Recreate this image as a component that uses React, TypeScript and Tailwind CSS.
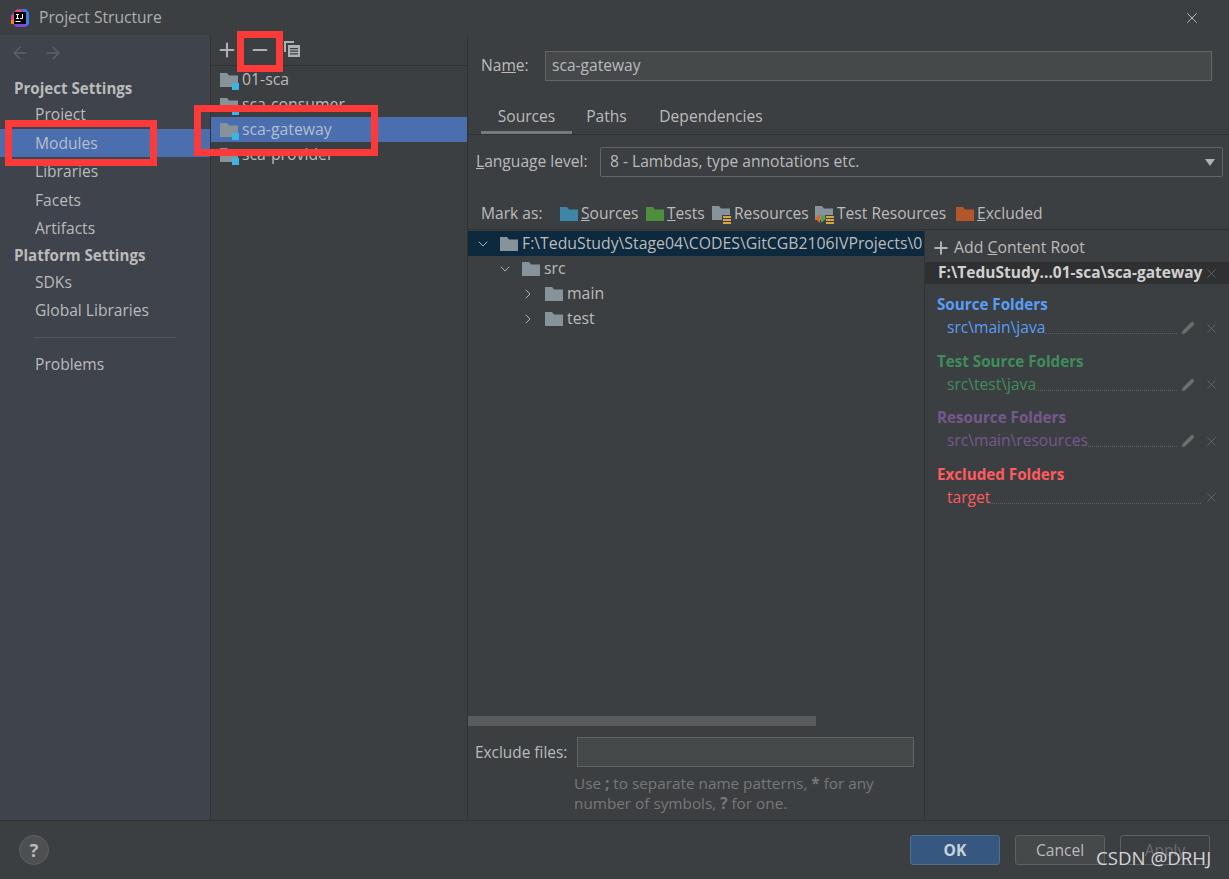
import React from "react";
import { Plus, Minus, X, ArrowLeft, ArrowRight, ChevronDown, ChevronRight, Pencil } from "lucide-react";

function Folder({ c = "#87939a", className = "" }: { c?: string; className?: string }) {
  return (
    <svg width="18" height="14" viewBox="0 0 18 14" className={className}>
      <path d="M0 0h7l2 2.5h9V14H0z" fill={c} />
    </svg>
  );
}

function ModuleFolder() {
  return (
    <span className="relative block w-[18px] h-[14px] shrink-0">
      <Folder />
      <span className="absolute left-[12px] top-[10px] w-[7px] h-[7px] bg-[#3cb4e6]" />
    </span>
  );
}

function ResourceIcon({ test = false }: { test?: boolean }) {
  return (
    <svg width="20" height="18" viewBox="0 0 20 18" className="shrink-0 mt-[2px]">
      <path d="M0 0h7l2 2.5h9V14H0z" fill="#87939a" />
      <path d="M10 9h10v9H10z" fill="#3c3f41" />
      <path d="M11 10h8v2h-8zM11 13h8v2h-8zM11 16h8v2h-8z" fill="#d9a343" />
      {test && <path d="M5 8v9L0 12.5z" fill="#e8622c" />}
      {test && <path d="M6 8v9l5-4.5z" fill="#4ca64c" />}
    </svg>
  );
}

function NavItem({ label, active = false }: { label: string; active?: boolean }) {
  return (
    <div className={"h-[28.5px] flex items-center pl-[35px] pt-[1px] text-[15.6px] " + (active ? "bg-[#4b6eaf] text-[#b4bfcc]" : "text-[#bbbbbb]")}>{label}</div>
  );
}

function ModuleRow({ label, active = false }: { label: string; active?: boolean }) {
  return (
    <div className={"h-[25px] flex items-center pl-[9px] gap-[4px] text-[15.8px] " + (active ? "bg-[#4b6eaf] text-[#b4bfcc]" : "text-[#bbbbbb]")}>
      <ModuleFolder />
      <span>{label}</span>
    </div>
  );
}

function Tree({ pad, label, open, sel }: { pad: number; label: string; open: boolean; sel?: boolean }) {
  return (
    <div className={"h-[25px] flex items-center text-[15.8px] text-[#bbbbbb] whitespace-nowrap overflow-hidden " + (sel ? "bg-[#0d293e]" : "")} style={{ paddingLeft: pad }}>
      {open ? <ChevronDown size={16} strokeWidth={1.5} className="shrink-0 text-[#afb1b3]" /> : <ChevronRight size={16} strokeWidth={1.5} className="shrink-0 text-[#afb1b3]" />}
      <Folder className="shrink-0 ml-[9px] mr-[4px]" />
      <span>{label}</span>
    </div>
  );
}

function FolderGroup({ title, path, color, edit = true }: { title: string; path: string; color: string; edit?: boolean }) {
  return (
    <div className="h-[56.5px] pl-[12px] pr-[10px]">
      <div className="h-[25px] flex items-center text-[15.2px] font-bold" style={{ color }}>{title}</div>
      <div className="h-[22px] flex items-center pl-[10px] text-[15.6px]" style={{ color }}>
        <span>{path}</span>
        <span className="flex-1 self-end mb-[5px] border-b border-dotted border-[#5f6163] mr-[3px]" />
        {edit && <Pencil size={14} fill="#6e6e6e" strokeWidth={1} className="text-[#6e6e6e] mr-[9px] ml-[1px]" />}
        <X size={15} strokeWidth={1.3} className="text-[#6a6d6f]" />
      </div>
    </div>
  );
}

export default function App() {
  return (
    <div className="relative w-[1229px] h-[879px] overflow-hidden bg-[#3c3f41] flex flex-col text-[#bbbbbb] font-['Open_Sans','Noto_Sans',sans-serif]">
      {/* title bar */}
      <div className="h-[35px] shrink-0 flex items-center pl-[10px] pr-[28px] text-[15.6px] text-[#adafb0]">
        <svg width="20" height="20" viewBox="0 0 20 20" className="mr-[9px]">
          <path d="M1 7 7 1h8l4 4v10l-4 4H6L1 14z" fill="#7b4bd8" />
          <path d="M1 10 6 2h6L3 16z" fill="#f0495f" />
          <path d="M13 1h3l3 4v11l-3 3z" fill="#3a7bf0" />
          <path d="M1 12h3v4H1z" fill="#f58220" />
          <rect x="4" y="4" width="12" height="12" fill="#000" />
          <rect x="5.5" y="13" width="5" height="1" fill="#fff" />
          <path d="M6 6h3v1h-1v3h1v1H6v-1h1V7H6zM10 6h3v4c0 1-1 1-3 1v-1h2V6z" fill="#fff" />
        </svg>
        <span>Project Structure</span>
        <X size={18} strokeWidth={1.2} className="ml-auto text-[#c4c4c4]" />
      </div>

      <div className="flex-1 min-h-0 flex border-b border-[#2f3132]">
        {/* sidebar */}
        <div className="w-[211px] shrink-0 bg-[#3e434c] border-r border-[#323232] flex flex-col">
          <div className="h-[36px] shrink-0 flex items-center pl-[10px] gap-[13px] text-[#5f6264]">
            <ArrowLeft size={20} strokeWidth={1.6} />
            <ArrowRight size={20} strokeWidth={1.6} />
          </div>
          <div className="h-[29px] shrink-0 pt-[5px] pl-[14px] flex items-center text-[15.1px] font-bold">Project Settings</div>
          <NavItem label="Project" />
          <NavItem label="Modules" active />
          <NavItem label="Libraries" />
          <NavItem label="Facets" />
          <NavItem label="Artifacts" />
          <div className="h-[25px] shrink-0 pl-[14px] flex items-center text-[15.1px] font-bold">Platform Settings</div>
          <NavItem label="SDKs" />
          <NavItem label="Global Libraries" />
          <div className="mx-[34px] mt-[12px] mb-[12px] border-t border-[#51555c]" />
          <NavItem label="Problems" />
        </div>

        {/* middle */}
        <div className="w-[257px] shrink-0 border-r border-[#323232] flex flex-col">
          <div className="h-[31px] shrink-0 flex items-center pl-[5px] border-b border-[#323232] text-[#afb1b3]">
            <Plus size={22} strokeWidth={2.3} />
            <Minus size={22} strokeWidth={2.3} className="ml-[11px]" />
            <svg width="16" height="16" viewBox="0 0 16 16" className="ml-[13px] -mt-[2px]">
              <path d="M0 0h10v2H2v9H0z" fill="#afb1b3" />
              <path d="M4 4h12v12H4z" fill="#afb1b3" />
              <path d="M6 7h8v1.2H6zM6 9.6h8v1.2H6zM6 12.2h8v1.2H6z" fill="#3c3f41" />
            </svg>
          </div>
          <div className="h-[1px]" />
          <ModuleRow label="01-sca" />
          <ModuleRow label="sca-consumer" />
          <ModuleRow label="sca-gateway" active />
          <ModuleRow label="sca-provider" />
        </div>

        {/* detail */}
        <div className="flex-1 min-w-0 flex flex-col">
          <div className="h-[61px] shrink-0 flex items-center pl-[13px] pr-[17px] text-[15.6px]">
            <span className="w-[64px]">Na<span className="underline">m</span>e:</span>
            <div className="flex-1 h-[30px] bg-[#45494a] border border-[#646464] flex items-center pl-[6px] text-[#bbbbbb]">sca-gateway</div>
          </div>
          <div className="h-[39px] shrink-0 pl-[13px] flex items-stretch text-[15.6px] border-b border-[#323232]">
            <div className="w-[91px] flex items-center justify-center border-b-[3px] border-[#747a80] pt-[7px]">Sources</div>
            <div className="w-[69px] flex items-center justify-center pt-[7px] pb-[3px]">Paths</div>
            <div className="w-[140px] flex items-center justify-center pt-[7px] pb-[3px]">Dependencies</div>
          </div>
          <div className="h-[54px] shrink-0 flex items-center pl-[8px] pr-[6px] text-[15.6px]">
            <span className="w-[124px]"><span className="underline">L</span>anguage level:</span>
            <div className="flex-1 h-[30px] bg-[#3c3f41] border border-[#646464] rounded-[2px] flex items-center pl-[9px] pr-[7px]">
              <span>8 - Lambdas, type annotations etc.</span>
              <span className="ml-auto w-0 h-0 border-l-[5px] border-r-[5px] border-t-[7px] border-l-transparent border-r-transparent border-t-[#afb1b3]" />
            </div>
          </div>
          <div className="h-[40px] shrink-0 pt-[10px] flex items-center pl-[13px] text-[15.6px] whitespace-nowrap">
            <span className="w-[79px]">Mark as:</span>
            <span className="flex items-center gap-[3px] w-[86px]"><Folder c="#3d86a7" /><span><span className="underline">S</span>ources</span></span>
            <span className="flex items-center gap-[3px] w-[66px]"><Folder c="#4d8f3d" /><span><span className="underline">T</span>ests</span></span>
            <span className="flex items-center gap-[2px] w-[103px]"><ResourceIcon />Resources</span>
            <span className="flex items-center gap-[2px] w-[141px]"><ResourceIcon test />Test Resources</span>
            <span className="flex items-center gap-[3px]"><Folder c="#b3562c" /><span><span className="underline">E</span>xcluded</span></span>
          </div>
          <div className="flex-1 min-h-0 flex border-t border-[#323232]">
            <div className="w-[457px] shrink-0 flex flex-col border-r border-[#323232]">
              <div className="pt-[1px]">
                <Tree pad={7} label="F:\TeduStudy\Stage04\CODES\GitCGB2106IVProjects\0" open sel />
                <Tree pad={29} label="src" open />
                <Tree pad={52} label="main" open={false} />
                <Tree pad={52} label="test" open={false} />
              </div>
              <div className="flex-1" />
              <div className="h-[10px] w-[348px] bg-[#595b5d] shrink-0 mb-[9px]" />
              <div className="shrink-0 h-[34px] flex items-center pl-[7px] pr-[10px] text-[15.4px]">
                <span className="w-[102px] pt-[2px]">Exclude files:</span>
                <div className="flex-1 h-[30px] bg-[#45494a] border border-[#646464]" />
              </div>
              <div className="shrink-0 h-[51px] pl-[106px] pt-[4px] text-[15.3px] leading-[20px] text-[#787878]">
                Use <b>;</b> to separate name patterns, <b>*</b> for any<br />number of symbols, <b>?</b> for one.
              </div>
            </div>
            <div className="flex-1 min-w-0 flex flex-col">
              <div className="h-[32px] pt-[4px] shrink-0 flex items-center pl-[6px] gap-[3px] text-[15.8px]">
                <Plus size={20} strokeWidth={2.4} className="text-[#afb1b3]" />
                <span>Add <span className="underline">C</span>ontent Root</span>
              </div>
              <div className="h-[22px] shrink-0 bg-[#2f3032] flex items-center pl-[13px] pr-[10px] text-[15.5px] font-bold text-[#d0d0d0] whitespace-nowrap">
                <span>F:\TeduStudy...01-sca\sca-gateway</span>
                <X size={15} strokeWidth={1.3} className="ml-auto text-[#6a6d6f]" />
              </div>
              <div className="h-[8px] shrink-0" />
              <FolderGroup title="Source Folders" path="src\main\java" color="#589df6" />
              <FolderGroup title="Test Source Folders" path="src\test\java" color="#3f8d5c" />
              <FolderGroup title="Resource Folders" path="src\main\resources" color="#76588f" />
              <FolderGroup title="Excluded Folders" path="target" color="#ff5a5f" edit={false} />
            </div>
          </div>
        </div>
      </div>

      {/* footer */}
      <div className="h-[58px] shrink-0 flex items-center pl-[19px] pr-[19px] text-[15.6px]">
        <div className="w-[30px] h-[30px] rounded-full bg-[#4c5052] border border-[#5e6060] flex items-center justify-center text-[18px] font-bold text-[#bbbbbb]">?</div>
        <div className="ml-auto flex gap-[15px]">
          <div className="w-[90px] h-[30px] rounded-[3px] bg-[#365880] border border-[#4c708c] flex items-center justify-center font-bold text-[#c6d3de] pt-[1px]">OK</div>
          <div className="w-[90px] h-[30px] rounded-[3px] bg-[#45494a] border border-[#5e6060] flex items-center justify-center pt-[1px]">Cancel</div>
          <div className="w-[90px] h-[30px] rounded-[3px] border border-[#5e6060] flex items-center justify-center text-[#6a6c6e] pt-[1px]">Apply</div>
        </div>
      </div>

      {/* annotations */}
      <div className="absolute left-[5px] top-[120px] w-[152px] h-[46px] border-[7px] border-[#fc3a3a]" />
      <div className="absolute left-[194px] top-[105px] w-[184px] h-[51px] border-[7px] border-[#fc3a3a]" />
      <div className="absolute left-[237px] top-[31px] w-[46px] h-[41px] border-[7px] border-[#fc3a3a]" />
      <div className="absolute left-[1096px] top-[846px] text-[18.7px] text-[#d4d4d4] leading-[24px] whitespace-nowrap">CSDN @DRHJ</div>
    </div>
  );
}
